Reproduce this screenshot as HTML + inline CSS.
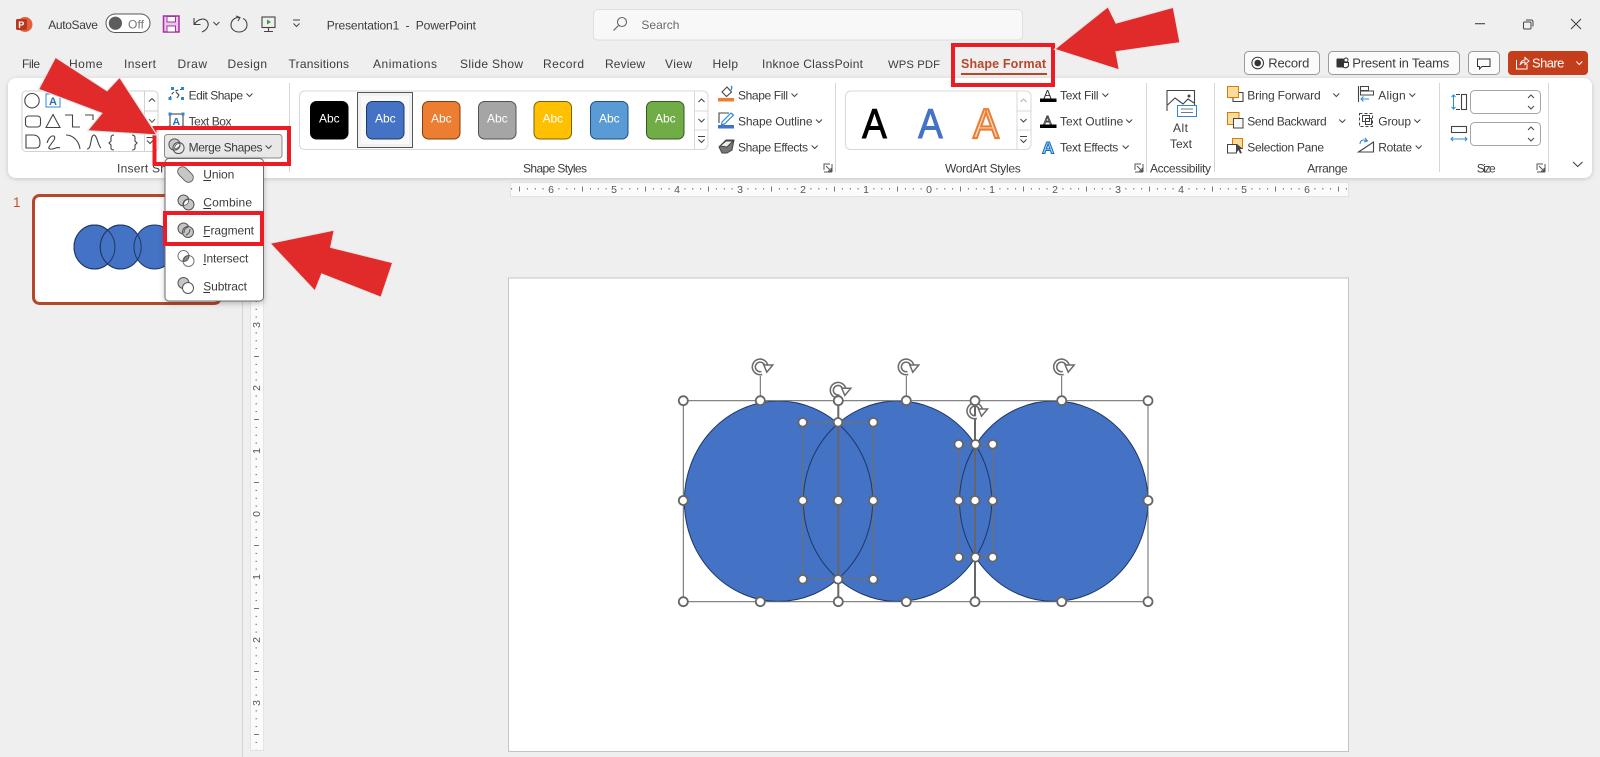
<!DOCTYPE html>
<html lang="en"><head><meta charset="utf-8"><title>Presentation1 - PowerPoint</title>
<style>
html,body{margin:0;padding:0;background:#efefef;overflow:hidden;width:1600px;height:757px}
svg{display:block}
text{font-family:"Liberation Sans",sans-serif;font-size:12px;fill:#3c3c3c}
.n{font-size:10.5px;fill:#555}
.abc{font-size:12px;fill:#fff;text-anchor:middle}
.ic{fill:none;stroke:#444;stroke-width:1.1}
.chev{fill:none;stroke:#444;stroke-width:1}
.h{fill:#fff;stroke:#666;stroke-width:1.8}
.bb{fill:none;stroke:#666;stroke-width:1}
.bl{fill:none;stroke:#757067;stroke-width:1}
.ar{fill:#e12b2b;stroke:#e9e6e6;stroke-width:1.2;stroke-linejoin:miter}
.rb{fill:none;stroke:#ed1c24;stroke-width:4}
.sw{stroke-width:1}
.sep{stroke:#d6d6d6;stroke-width:1}
</style></head><body>
<svg width="1600" height="757" viewBox="0 0 1600 757" xmlns="http://www.w3.org/2000/svg">
<defs>
<filter id="s" x="-5%" y="-20%" width="110%" height="140%"><feDropShadow dx="0" dy="1" stdDeviation="2" flood-color="#000" flood-opacity=".18"/></filter>
<filter id="m" x="-20%" y="-10%" width="140%" height="120%"><feDropShadow dx="0" dy="2" stdDeviation="3" flood-color="#000" flood-opacity=".25"/></filter>
<path id="c" class="chev" d="M-3,-1.5 L0,1.5 L3,-1.5"/>
<path id="u" class="chev" d="M-3,1.5 L0,-1.5 L3,1.5"/>
<g id="more"><path class="chev" d="M-3.5,-3.5 H3.5 M-3,-0.5 L0,2.5 L3,-0.5"/></g>
<g id="lau"><path fill="none" stroke="#555" stroke-width="1" d="M-4,2 V-4 H2 M-2,-2 L3,3 M3,0 V3 H0 M-4,4 H4 M4,-4 V4"/></g>
<g id="rot"><path fill="none" stroke="#6b6b6b" stroke-width="4.6" d="M6,-1 A6.3,6.3 0 1 0 1.5,6.3"/><path fill="none" stroke="#fff" stroke-width="1.5" d="M6,-1 A6.3,6.3 0 1 0 1.5,6.3"/><path d="M3.500,-1.700 L12.500,-1.700 L6.500,5.500Z" fill="#fff" stroke="#6b6b6b" stroke-width="1.500"/></g>
<pattern id="hr" width="63" height="14" patternUnits="userSpaceOnUse" patternTransform="translate(929,182)">
<rect x="7.4" y="6" width="1" height="1.6" fill="#777"/><rect x="15.3" y="6" width="1" height="1.6" fill="#777"/><rect x="23.1" y="6" width="1" height="1.6" fill="#777"/><rect x="31" y="4.5" width="1" height="5" fill="#777"/><rect x="38.9" y="6" width="1" height="1.6" fill="#777"/><rect x="46.8" y="6" width="1" height="1.6" fill="#777"/><rect x="54.6" y="6" width="1" height="1.6" fill="#777"/>
</pattern>
<pattern id="vr" width="14" height="63" patternUnits="userSpaceOnUse" patternTransform="translate(250,514)">
<rect x="5.5" y="7.4" width="1.6" height="1" fill="#777"/><rect x="5.5" y="15.3" width="1.6" height="1" fill="#777"/><rect x="5.5" y="23.1" width="1.6" height="1" fill="#777"/><rect x="4" y="31" width="5" height="1" fill="#777"/><rect x="5.5" y="38.9" width="1.6" height="1" fill="#777"/><rect x="5.5" y="46.8" width="1.6" height="1" fill="#777"/><rect x="5.5" y="54.6" width="1.6" height="1" fill="#777"/>
</pattern>
</defs>

<rect width="1600" height="757" fill="#efefef"/>

<!-- title bar -->
<circle cx="25" cy="24.5" r="7.5" fill="#e0603a"/><rect x="16" y="19" width="11" height="11" rx="1.5" fill="#b7381e"/>
<text x="18.3" y="28" style="font-size:9px;font-weight:bold;fill:#fff">P</text>
<text x="48.2" y="29" textLength="49.7">AutoSave</text>
<rect x="106" y="14" width="44" height="18.5" rx="9.2" fill="#fff" stroke="#555" stroke-width="1"/>
<circle cx="115.4" cy="23.2" r="6.6" fill="#5c5c5c"/>
<text x="128" y="28.5" textLength="16" style="fill:#777">Off</text>
<path d="M163.5,16 H179 V32 H163.5Z" fill="#e9c7ec" stroke="#a5309f" stroke-width="1.5"/><rect x="167" y="16.5" width="8.5" height="5.5" fill="#fff" stroke="#a5309f"/><rect x="167" y="26" width="8.5" height="6" fill="#fff" stroke="#a5309f"/>
<path class="ic" d="M194,18 V24.5 H200.5 M194.5,24 C198,19 204,17.5 207,21 C210,25 207,30 202,32"/>
<use href="#c" x="216.4" y="23.5"/>
<path class="ic" d="M240,17.5 C234,17 231,21 231,25 C231,29 234.5,32 239,32 C243.5,32 247,29 247,25 C247,22 245.5,19.5 243,18.5 M236,16 L240,17.5 L238,21"/>
<rect x="262" y="17" width="13" height="10.5" class="ic"/><path d="M267,19.5 L271,22 L267,24.5Z" fill="#3f9a3f"/><path class="ic" d="M268.5,27.5 V31 M264,31.5 H273"/>
<path class="chev" d="M293,20 H300 M293.5,23.5 L296.5,26.5 L299.5,23.5"/>
<text x="326.8" y="29.5" textLength="149.2" xml:space="preserve">Presentation1  -  PowerPoint</text>

<rect x="593.5" y="9.5" width="429" height="30.5" rx="4" fill="#f8f8f8" stroke="#dedede"/>
<circle cx="622" cy="22" r="4.5" fill="none" stroke="#666" stroke-width="1.1"/><path d="M618.5,25.5 L613.5,30.5" stroke="#666" stroke-width="1.2"/>
<text x="641.4" y="29" textLength="38" style="fill:#6a6a6a">Search</text>

<path d="M1475,23.7 H1485" stroke="#444" stroke-width="1.1"/>
<rect x="1523.5" y="22" width="7.5" height="7" rx="1" fill="none" stroke="#444" stroke-width="1"/><path d="M1526,20 H1531 Q1533,20 1533,22 V26.5" fill="none" stroke="#444" stroke-width="1"/>
<path d="M1571,19 L1581,29 M1581,19 L1571,29" stroke="#444" stroke-width="1.1"/>

<!-- tabs -->
<g>
<text x="22" y="68" textLength="18">File</text>
<text x="69" y="68" textLength="33.5">Home</text>
<text x="124" y="68" textLength="32">Insert</text>
<text x="177.5" y="68" textLength="29.5">Draw</text>
<text x="227.5" y="68" textLength="39.5">Design</text>
<text x="288.5" y="68" textLength="60.5">Transitions</text>
<text x="373" y="68" textLength="64">Animations</text>
<text x="460" y="68" textLength="63">Slide Show</text>
<text x="543" y="68" textLength="41">Record</text>
<text x="605" y="68" textLength="40">Review</text>
<text x="665" y="68" textLength="27">View</text>
<text x="712.5" y="68" textLength="25.5">Help</text>
<text x="762" y="68" textLength="101">Inknoe ClassPoint</text>
<text x="888" y="68" textLength="52" style="font-size:11.3px">WPS PDF</text>
<text x="961" y="68" textLength="85" style="fill:#b7472a;font-weight:bold;font-size:12.5px">Shape Format</text>
<rect x="961" y="73" width="86" height="2" fill="#b7472a"/>
</g>

<!-- title-right buttons -->
<rect x="1244.5" y="51.5" width="75" height="23" rx="4" fill="#fbfbfb" stroke="#9a9a9a"/>
<circle cx="1257.7" cy="63" r="5.8" fill="none" stroke="#333"/><circle cx="1257.7" cy="63" r="3.3" fill="#333"/>
<text x="1268.3" y="67.5" textLength="41" style="font-size:13px">Record</text>
<rect x="1328.5" y="51.5" width="131" height="23" rx="4" fill="#fbfbfb" stroke="#9a9a9a"/>
<rect x="1336.5" y="58.5" width="7.5" height="9" rx="1" fill="#333"/><circle cx="1346" cy="60" r="2" fill="none" stroke="#333"/><path d="M1344,62.5 H1348.5 V66 Q1346,69 1343,67" fill="none" stroke="#333"/>
<text x="1352.3" y="67.5" textLength="97" style="font-size:13px">Present in Teams</text>
<rect x="1468.5" y="51.5" width="31" height="23" rx="4" fill="#fbfbfb" stroke="#9a9a9a"/>
<path d="M1477.5,59 H1490 V66.5 H1482 L1479.5,69 V66.5 H1477.5Z" fill="none" stroke="#333"/>
<rect x="1508" y="51" width="80" height="24" rx="4" fill="#c43e1c"/>
<path d="M1516.5,60 V69 H1527 V64" fill="none" stroke="#fff"/><path d="M1520,65 Q1521,60 1525,60 V57.5 L1529,61 L1525,64.5 V62 Q1522,62 1520,65Z" fill="none" stroke="#fff"/>
<text x="1532" y="67.5" textLength="32.3" style="font-size:13px;fill:#fff">Share</text>
<path d="M1576.3,61.5 L1579.3,64.5 L1582.3,61.5" fill="none" stroke="#fff" stroke-width="1.1"/>

<!-- ribbon -->
<rect x="8" y="78" width="1584" height="100" rx="8" fill="#fff" filter="url(#s)"/>
<path class="sep" d="M289.5,83 V172 M835.5,83 V172 M1146.5,83 V172 M1214.5,83 V172 M1439.5,83 V172 M1548.5,83 V172"/>

<!-- shapes gallery -->
<rect x="22" y="91" width="136" height="60.5" rx="4" fill="#fff" stroke="#d2d2d2"/>
<path d="M144.5,91 V151.5 M144.5,111 H158 M144.5,131 H158" stroke="#d2d2d2"/>
<use href="#u" x="152" y="100"/><use href="#c" x="152" y="120.7"/><use href="#more" x="150" y="141"/>
<circle cx="32" cy="100.7" r="7.2" class="ic"/>
<rect x="46" y="94" width="14" height="13" fill="none" stroke="#2b88d8"/><text x="49" y="105" style="font-size:11px;fill:#2b6cb0;font-weight:bold">A</text>
<rect x="25.5" y="116" width="15" height="11" rx="3" class="ic"/>
<path class="ic" d="M46,127.5 L53,114.5 L60,127.5Z M65,115 H72.5 V127 H80 M85,115 H93 V120"/>
<path class="ic" d="M26,135 H33 Q40,135 40,143 Q40,148 36,148 H26Z M47,143 C50,133 57,135 54,140 C50,146 47,148 50,149 C54,150 57,146 60,148 M66,135 C73,135 79,141 80,149 M87,149 C92,149 90,135 94,135 C97,135 98,146 101,148"/>
<path class="ic" d="M114,135 Q110.5,135 111,139 V141 L109,143 L111,145 V147 Q110.5,150 114,150 M132,135 Q135.5,135 135,139 V141 L137,143 L135,145 V147 Q135.5,150 132,150"/>

<!-- edit shape etc -->
<path fill="none" stroke="#333" stroke-dasharray="3 2" d="M170,99 C171,92 176,90 183,89"/><rect x="171" y="87" width="3" height="3" fill="#2b88d8"/><rect x="181" y="87" width="3" height="3" fill="#2b88d8"/><rect x="168.5" y="97" width="3" height="3" fill="#2b88d8"/><rect x="181" y="97" width="3" height="3" fill="#2b88d8"/><path class="ic" d="M176,92 L179,95 L177,98"/>
<text x="188.6" y="99.5" textLength="54.4">Edit Shape</text><use href="#c" x="249.5" y="95"/>
<rect x="170" y="114" width="13" height="13" fill="#fff" stroke="#333"/><rect x="168.5" y="112.5" width="3" height="3" fill="#2b88d8"/><rect x="181.5" y="112.5" width="3" height="3" fill="#2b88d8"/><rect x="168.5" y="125.5" width="3" height="3" fill="#2b88d8"/><rect x="181.5" y="125.5" width="3" height="3" fill="#2b88d8"/>
<text x="172.5" y="125" style="font-size:10.5px;font-weight:bold;fill:#1f6fb8">A</text>
<text x="188.6" y="125.5" textLength="42.9">Text Box</text>
<text x="117" y="172.5" textLength="77">Insert Shapes</text>

<!-- shape styles -->
<rect x="299.5" y="91" width="408.5" height="58.5" rx="5" fill="#fff" stroke="#d8d8d8"/>
<path d="M694.5,91 V149.5 M694.5,111 H708 M694.5,130 H708" stroke="#d8d8d8"/>
<use href="#u" x="701.5" y="100.5"/><use href="#c" x="701.5" y="120.5"/><use href="#more" x="701.5" y="140"/>
<rect x="357.5" y="92.5" width="55" height="55" fill="#f1f1f1" stroke="#555"/><rect x="361" y="96" width="48" height="48" fill="#fff" opacity=".6"/>
<rect class="sw" x="310.5" y="101.5" width="37.5" height="37.5" rx="6" fill="#000" stroke="#000"/>
<rect class="sw" x="366.5" y="101.5" width="37.5" height="37.5" rx="6" fill="#4472c4" stroke="#1f3864"/>
<rect class="sw" x="422.5" y="101.5" width="37.5" height="37.5" rx="6" fill="#ed7d31" stroke="#843c0c"/>
<rect class="sw" x="478.5" y="101.5" width="37.5" height="37.5" rx="6" fill="#a5a5a5" stroke="#525252"/>
<rect class="sw" x="534" y="101.5" width="37.5" height="37.5" rx="6" fill="#ffc000" stroke="#7f6000"/>
<rect class="sw" x="590.5" y="101.5" width="37.5" height="37.5" rx="6" fill="#5b9bd5" stroke="#1f4e79"/>
<rect class="sw" x="646.5" y="101.5" width="37.5" height="37.5" rx="6" fill="#70ad47" stroke="#385723"/>
<text class="abc" x="329.3" y="122.5">Abc</text><text class="abc" x="385.3" y="122.5">Abc</text><text class="abc" x="441.3" y="122.5">Abc</text><text class="abc" x="497.3" y="122.5">Abc</text><text class="abc" x="552.8" y="122.5">Abc</text><text class="abc" x="609.3" y="122.5">Abc</text><text class="abc" x="665.3" y="122.5">Abc</text>

<path class="ic" d="M722,92 L727,87 L731.5,92 L726.5,96.5Z"/><path d="M730,91 Q733,88 731,86" fill="none" stroke="#2b88d8" stroke-width="1.3"/><rect x="718" y="98" width="16" height="3.5" fill="#ed7d31"/>
<text x="738" y="99.5" textLength="50">Shape Fill</text><use href="#c" x="794.5" y="95"/>
<path class="ic" d="M719,123 V113 H729"/><path d="M722,122 L731,113 L733.5,115 L724.5,124 L721.5,125Z" fill="none" stroke="#2b88d8" stroke-width="1.2"/><rect x="718" y="125" width="16" height="3.5" fill="#4472c4"/>
<text x="738" y="125.5" textLength="74.5">Shape Outline</text><use href="#c" x="819" y="121"/>
<path d="M719,147 L726,140 H734 L732,150 L727,153 H722Z" fill="#777" stroke="#444"/><path d="M720,146 L726,141 H733 L727,147Z" fill="#eee" stroke="#444"/>
<text x="738" y="151.5" textLength="70">Shape Effects</text><use href="#c" x="814.7" y="147"/>
<text x="523" y="172.5" textLength="64">Shape Styles</text><use href="#lau" x="828" y="168"/>

<!-- wordart -->
<rect x="845.5" y="91" width="185.5" height="58.5" rx="5" fill="#fff" stroke="#d8d8d8"/>
<path d="M1017,91 V149.5 M1017,111 H1031 M1017,130 H1031" stroke="#d8d8d8"/>
<use href="#u" x="1023.5" y="100.5" opacity=".4"/><use href="#c" x="1023.5" y="120.5"/><use href="#more" x="1023.5" y="140"/>
<text transform="translate(874.5,138) scale(.88,1)" style="font-size:42px;text-anchor:middle;fill:#000;stroke:#000;stroke-width:1">A</text>
<text transform="translate(930.5,138) scale(.88,1)" style="font-size:42px;text-anchor:middle;fill:#4472c4;stroke:#4472c4;stroke-width:1">A</text>
<text transform="translate(986,138) scale(.92,1)" style="font-size:42px;text-anchor:middle;fill:#fbe0cf;stroke:#ed7d31;stroke-width:2.2">A</text>

<text x="1043.5" y="98.5" style="fill:#333">A</text><rect x="1040" y="98.5" width="16.5" height="3.5" fill="#000"/>
<text x="1060" y="99.5" textLength="38.6">Text Fill</text><use href="#c" x="1105.4" y="95"/>
<text x="1043.5" y="124.5" style="fill:#fff;stroke:#444;stroke-width:.9">A</text><rect x="1040" y="124.5" width="16.5" height="3.5" fill="#000"/>
<text x="1060" y="125.5" textLength="63.3">Text Outline</text><use href="#c" x="1129.2" y="121"/>
<text x="1042" y="153.5" style="font-size:17px;fill:#9dcdf0;stroke:#106ebe;stroke-width:1;font-weight:bold">A</text>
<text x="1060" y="151.5" textLength="58.3">Text Effects</text><use href="#c" x="1125.7" y="147"/>
<text x="945" y="172.5" textLength="75.7">WordArt Styles</text><use href="#lau" x="1139" y="168"/>

<!-- alt text -->
<path class="ic" d="M1167,111 V90.5 H1194.5 V105"/><path class="ic" d="M1167.5,105 L1175,98 L1183,104 L1188,99 L1194,103"/><circle cx="1189" cy="96" r="1.5" fill="#444"/>
<rect x="1177.5" y="105.5" width="19" height="11" fill="#fff" stroke="#2b88d8"/><path d="M1181,109 H1193 M1181,112.5 H1193" stroke="#777"/>
<text x="1173" y="132" textLength="15">Alt</text><text x="1170" y="148" textLength="22">Text</text>
<text x="1150" y="172.5" textLength="61">Accessibility</text>

<!-- arrange -->
<path class="ic" d="M1238,92.5 H1243 V101.5 H1233 V98"/><rect x="1227.5" y="86.5" width="11" height="11" fill="#fbdc9a" stroke="#d97b00"/>
<text x="1247.3" y="99.5" textLength="73.4">Bring Forward</text><use href="#c" x="1336.3" y="95"/>
<rect x="1227.5" y="112.5" width="11.5" height="12" fill="#fbdc9a" stroke="#d97b00"/><rect x="1233.5" y="118.5" width="9.5" height="9.5" fill="#f8f8f8" stroke="#444"/>
<text x="1247.3" y="125.5" textLength="79.4">Send Backward</text><use href="#c" x="1342.3" y="121"/>
<rect x="1232.5" y="138.5" width="10" height="10" fill="#fbdc9a" stroke="#d97b00"/><rect x="1227.5" y="144.5" width="9" height="8.5" fill="#fff" stroke="#444"/><path d="M1237,144 L1243,149 H1240 L1242,153 L1240,153.5 L1238.5,150 L1237,152Z" fill="#444"/>
<text x="1247.3" y="151.5" textLength="76.7">Selection Pane</text>
<text x="1307.3" y="172.5" textLength="40.4">Arrange</text>

<path class="ic" d="M1358.5,86 V102"/><rect x="1360.5" y="86.5" width="8" height="4" fill="none" stroke="#444"/><rect x="1360.5" y="91" width="13" height="4" fill="none" stroke="#444"/><path d="M1369,99 H1361 M1363.5,96.5 L1361,99 L1363.5,101.5" fill="none" stroke="#2b88d8"/>
<text x="1378.3" y="99.5" textLength="27.4">Align</text><use href="#c" x="1412.3" y="95"/>
<rect x="1359.5" y="113.5" width="13" height="13" fill="none" stroke="#444" stroke-dasharray="3 2"/><rect x="1362.5" y="115.5" width="7" height="6" fill="none" stroke="#444"/><rect x="1365.5" y="118.5" width="6" height="6" fill="none" stroke="#444"/>
<text x="1378.3" y="125.5" textLength="32.7">Group</text><use href="#c" x="1417.3" y="121"/>
<path class="ic" d="M1358.5,152 L1373.5,142 V152Z"/><path d="M1360,144 C1360,140 1364,139 1367,141 M1365,138 L1367.5,141 L1364,142" fill="none" stroke="#2b88d8"/>
<text x="1378.3" y="151.5" textLength="33.7">Rotate</text><use href="#c" x="1418.7" y="147"/>

<!-- size -->
<rect x="1461.5" y="94.5" width="5" height="15" class="ic"/><path d="M1453.5,95 V109" stroke="#2b88d8"/><path d="M1451.5,97 L1453.5,95 L1455.5,97 M1451.5,107 L1453.5,109 L1455.5,107" fill="none" stroke="#2b88d8"/><path d="M1456,94.5 H1460 M1456,109.5 H1460" stroke="#444"/>
<rect x="1470.5" y="90.5" width="70" height="23" rx="4" fill="#fff" stroke="#a5a5a5"/><use href="#u" x="1531" y="96.5"/><use href="#c" x="1531" y="107.5"/>
<rect x="1451.5" y="126.5" width="15" height="6" class="ic"/><path d="M1451,139 H1467" stroke="#2b88d8"/><path d="M1453,137 L1451,139 L1453,141 M1465,137 L1467,139 L1465,141" fill="none" stroke="#2b88d8"/>
<rect x="1470.5" y="122.5" width="70" height="23" rx="4" fill="#fff" stroke="#a5a5a5"/><use href="#u" x="1531" y="128.5"/><use href="#c" x="1531" y="139.5"/>
<text x="1476.7" y="172.5" textLength="19">Size</text><use href="#lau" x="1541" y="168"/>
<path d="M1573,162 L1577.7,166.5 L1582.5,162" fill="none" stroke="#444" stroke-width="1.1"/>

<!-- top ruler -->
<rect x="510.5" y="182.5" width="838" height="14" fill="#fbfbfb" stroke="#e2e2e2"/>
<rect x="511" y="182" width="837" height="14" fill="url(#hr)"/>
<g text-anchor="middle">
<text class="n" x="551" y="193">6</text><text class="n" x="614" y="193">5</text><text class="n" x="677" y="193">4</text><text class="n" x="740" y="193">3</text><text class="n" x="803" y="193">2</text><text class="n" x="866" y="193">1</text><text class="n" x="929" y="193">0</text><text class="n" x="992" y="193">1</text><text class="n" x="1055" y="193">2</text><text class="n" x="1118" y="193">3</text><text class="n" x="1181" y="193">4</text><text class="n" x="1244" y="193">5</text><text class="n" x="1307" y="193">6</text>
</g>

<!-- left panel line + ruler -->
<path d="M242.5,178 V757" stroke="#d4d4d4"/>
<rect x="250.5" y="278.5" width="13" height="472" fill="#fbfbfb" stroke="#e4e4e4"/>
<rect x="251" y="279" width="12" height="471" fill="url(#vr)"/>
<g>
<text class="n" text-anchor="middle" transform="translate(260,325) rotate(-90)">3</text>
<text class="n" text-anchor="middle" transform="translate(260,388) rotate(-90)">2</text>
<text class="n" text-anchor="middle" transform="translate(260,451) rotate(-90)">1</text>
<text class="n" text-anchor="middle" transform="translate(260,514) rotate(-90)">0</text>
<text class="n" text-anchor="middle" transform="translate(260,577) rotate(-90)">1</text>
<text class="n" text-anchor="middle" transform="translate(260,640) rotate(-90)">2</text>
<text class="n" text-anchor="middle" transform="translate(260,703) rotate(-90)">3</text>
</g>

<!-- thumbnail -->
<text x="13" y="207" style="font-size:13.5px;fill:#c8502e">1</text>
<rect x="33.5" y="195.5" width="187" height="108" rx="6" fill="#fff" stroke="#b7472a" stroke-width="3"/>
<g fill="#4472c4" stroke="#1f3864" stroke-width="1">
<ellipse cx="94.5" cy="247" rx="20.5" ry="22"/><ellipse cx="120.7" cy="247" rx="20.5" ry="22"/><ellipse cx="154.5" cy="247" rx="20.5" ry="22"/>
</g>
<ellipse cx="94.5" cy="247" rx="20.5" ry="22" fill="none" stroke="#1f3864"/><ellipse cx="120.7" cy="247" rx="20.5" ry="22" fill="none" stroke="#1f3864"/>

<!-- slide -->
<rect x="508.5" y="278" width="840" height="473.5" fill="#fff" stroke="#c4c4c4"/>
<g fill="#4472c4">
<ellipse cx="778.5" cy="501.2" rx="94.2" ry="100.2"/><ellipse cx="897.5" cy="501.2" rx="94.2" ry="100.2"/><ellipse cx="1053.7" cy="501.2" rx="94.2" ry="100.2"/>
</g>
<g fill="none" stroke="#1f3864" stroke-width="1">
<ellipse cx="778.5" cy="501.2" rx="94.2" ry="100.2"/><ellipse cx="897.5" cy="501.2" rx="94.2" ry="100.2"/><ellipse cx="1053.7" cy="501.2" rx="94.2" ry="100.2"/>
</g>
<rect class="bb" x="683.3" y="400.7" width="155" height="201"/>
<rect class="bb" x="838.3" y="400.7" width="136.7" height="201"/>
<rect class="bb" x="975" y="400.7" width="173" height="201"/>
<path d="M838.3,400.7 V601.7 M975,400.7 V601.7" stroke="#666" stroke-width="2"/>
<rect class="bl" x="802.7" y="422.3" width="70.6" height="157"/>
<rect class="bl" x="958.7" y="444.3" width="34" height="113"/>
<path d="M760.3,400 V376 M906.3,400 V376 M1061.7,400 V376" stroke="#666" stroke-width="1"/>
<g transform="translate(760.3,366.7)"><use href="#rot"/></g>
<g transform="translate(906.3,366.7)"><use href="#rot"/></g>
<g transform="translate(1061.7,366.7)"><use href="#rot"/></g>
<g transform="translate(838.3,390)"><use href="#rot"/></g>
<g transform="translate(975,410.7)"><use href="#rot"/></g>
<g class="h">
<circle cx="683.3" cy="400.7" r="4.5"/><circle cx="760.3" cy="400.7" r="4.5"/><circle cx="838.3" cy="400.7" r="4.5"/><circle cx="906.3" cy="400.7" r="4.5"/><circle cx="975" cy="400.7" r="4.5"/><circle cx="1061.7" cy="400.7" r="4.5"/><circle cx="1148" cy="400.7" r="4.5"/>
<circle cx="683.3" cy="500.5" r="4.5"/><circle cx="838.3" cy="500.5" r="4.5"/><circle cx="975" cy="500.5" r="4.5"/><circle cx="1148" cy="500.5" r="4.5"/>
<circle cx="683.3" cy="601.7" r="4.5"/><circle cx="760.3" cy="601.7" r="4.5"/><circle cx="838.3" cy="601.7" r="4.5"/><circle cx="906.3" cy="601.7" r="4.5"/><circle cx="975" cy="601.7" r="4.5"/><circle cx="1061.7" cy="601.7" r="4.5"/><circle cx="1148" cy="601.7" r="4.5"/>
<circle cx="802.7" cy="422.3" r="4.3"/><circle cx="838" cy="422.3" r="4.3"/><circle cx="873.3" cy="422.3" r="4.3"/>
<circle cx="802.7" cy="500.5" r="4.3"/><circle cx="873.3" cy="500.5" r="4.3"/>
<circle cx="802.7" cy="579.3" r="4.3"/><circle cx="838" cy="579.3" r="4.3"/><circle cx="873.3" cy="579.3" r="4.3"/>
<circle cx="958.7" cy="444.3" r="4.3"/><circle cx="975.5" cy="444.3" r="4.3"/><circle cx="992.7" cy="444.3" r="4.3"/>
<circle cx="958.7" cy="500.5" r="4.3"/><circle cx="992.7" cy="500.5" r="4.3"/>
<circle cx="958.7" cy="557.3" r="4.3"/><circle cx="975.5" cy="557.3" r="4.3"/><circle cx="992.7" cy="557.3" r="4.3"/>
</g>

<!-- merge button -->
<rect x="164.5" y="134.5" width="117.5" height="23.5" rx="3" fill="#e8e8e8" stroke="#8a8a8a"/>
<circle cx="174.5" cy="144.5" r="5.6" fill="#c8c8c6" stroke="#555"/><circle cx="178.5" cy="148" r="5.6" fill="none" stroke="#555"/><path d="M174.5,148.5 Q175,143.500 180,143.500 Q180,148.500 174.500,148.500Z" fill="#fff" stroke="#555" stroke-width=".7"/>
<text x="188.6" y="151.5" textLength="73.9">Merge Shapes</text><use href="#c" x="268.6" y="147"/>

<!-- menu -->
<rect x="165" y="158.5" width="98.5" height="142.5" rx="4" fill="#fff" stroke="#6e6e6e" filter="url(#m)"/>
<!-- union -->
<path d="M182.5,171.5 L188.5,177.5" stroke="#555" stroke-width="10.5" stroke-linecap="round"/><path d="M182.5,171.5 L188.5,177.5" stroke="#c6c6c4" stroke-width="8.8" stroke-linecap="round"/>
<text x="203.3" y="178.5" textLength="31">Union</text><path d="M203.3,180.5 H211" stroke="#333"/>
<!-- combine -->
<circle cx="183.5" cy="200.5" r="5.5" fill="#c6c6c4" stroke="#555"/><circle cx="188.5" cy="204.5" r="5.5" fill="#c6c6c4" stroke="#555"/>
<path d="M183.5,205.5 Q183.500,200 188.500,199.500 Q189,205 183.500,205.500Z" fill="#fff" stroke="#555" stroke-width=".7"/>
<text x="203.3" y="206.5" textLength="48.7">Combine</text><path d="M203.3,208.5 H211" stroke="#333"/>
<!-- fragment -->
<circle cx="183.5" cy="228.500" r="5.500" fill="#c6c6c4" stroke="#555"/><circle cx="188" cy="232" r="5.500" fill="#c6c6c4" stroke="#555"/><path d="M184,233 Q184,228 188.500,227 M186,235 Q190,233.500 190,229" fill="none" stroke="#555"/>
<text x="203.3" y="234.5" textLength="50.7">Fragment</text><path d="M203.3,236.5 H210" stroke="#333"/>
<!-- intersect -->
<circle cx="183.5" cy="256" r="5.5" fill="#fff" stroke="#777"/><circle cx="188.5" cy="261" r="5.5" fill="none" stroke="#777"/><path d="M183.500,261.500 Q183.500,256 189,255.500 Q189,261 183.500,261.500Z" fill="#8a8a8a" stroke="#555" stroke-width=".7"/>
<text x="203.3" y="262.5" textLength="45">Intersect</text><path d="M203.3,264.5 H206" stroke="#333"/>
<!-- subtract -->
<circle cx="183.5" cy="283" r="5.5" fill="#c6c6c4" stroke="#555"/><circle cx="188" cy="288" r="5.5" fill="#fff" stroke="#555"/>
<text x="203.3" y="290.5" textLength="43.7">Subtract</text><path d="M203.3,292.5 H210" stroke="#333"/>

<!-- red boxes -->
<rect class="rb" x="953" y="45" width="100" height="40"/>
<rect class="rb" x="154.5" y="128" width="134.5" height="36"/>
<rect class="rb" x="165" y="213" width="97" height="31"/>

<!-- arrows -->
<path class="ar" d="M55.4,57.3 L107,90.7 L119.6,77.3 L157,135 L87.5,130.7 L101.8,113.3 L38.6,89.3Z"/>
<path class="ar" d="M1054.6,49.3 L1108,6.7 L1116,23 L1173.3,7.3 L1180,42.7 L1116,51.7 L1119.3,70Z"/>
<path class="ar" d="M270,243.3 L334.3,230 L330.7,247.3 L392.7,262.7 L381,297.3 L321.7,274 L315,291Z"/>
</svg>
</body></html>
